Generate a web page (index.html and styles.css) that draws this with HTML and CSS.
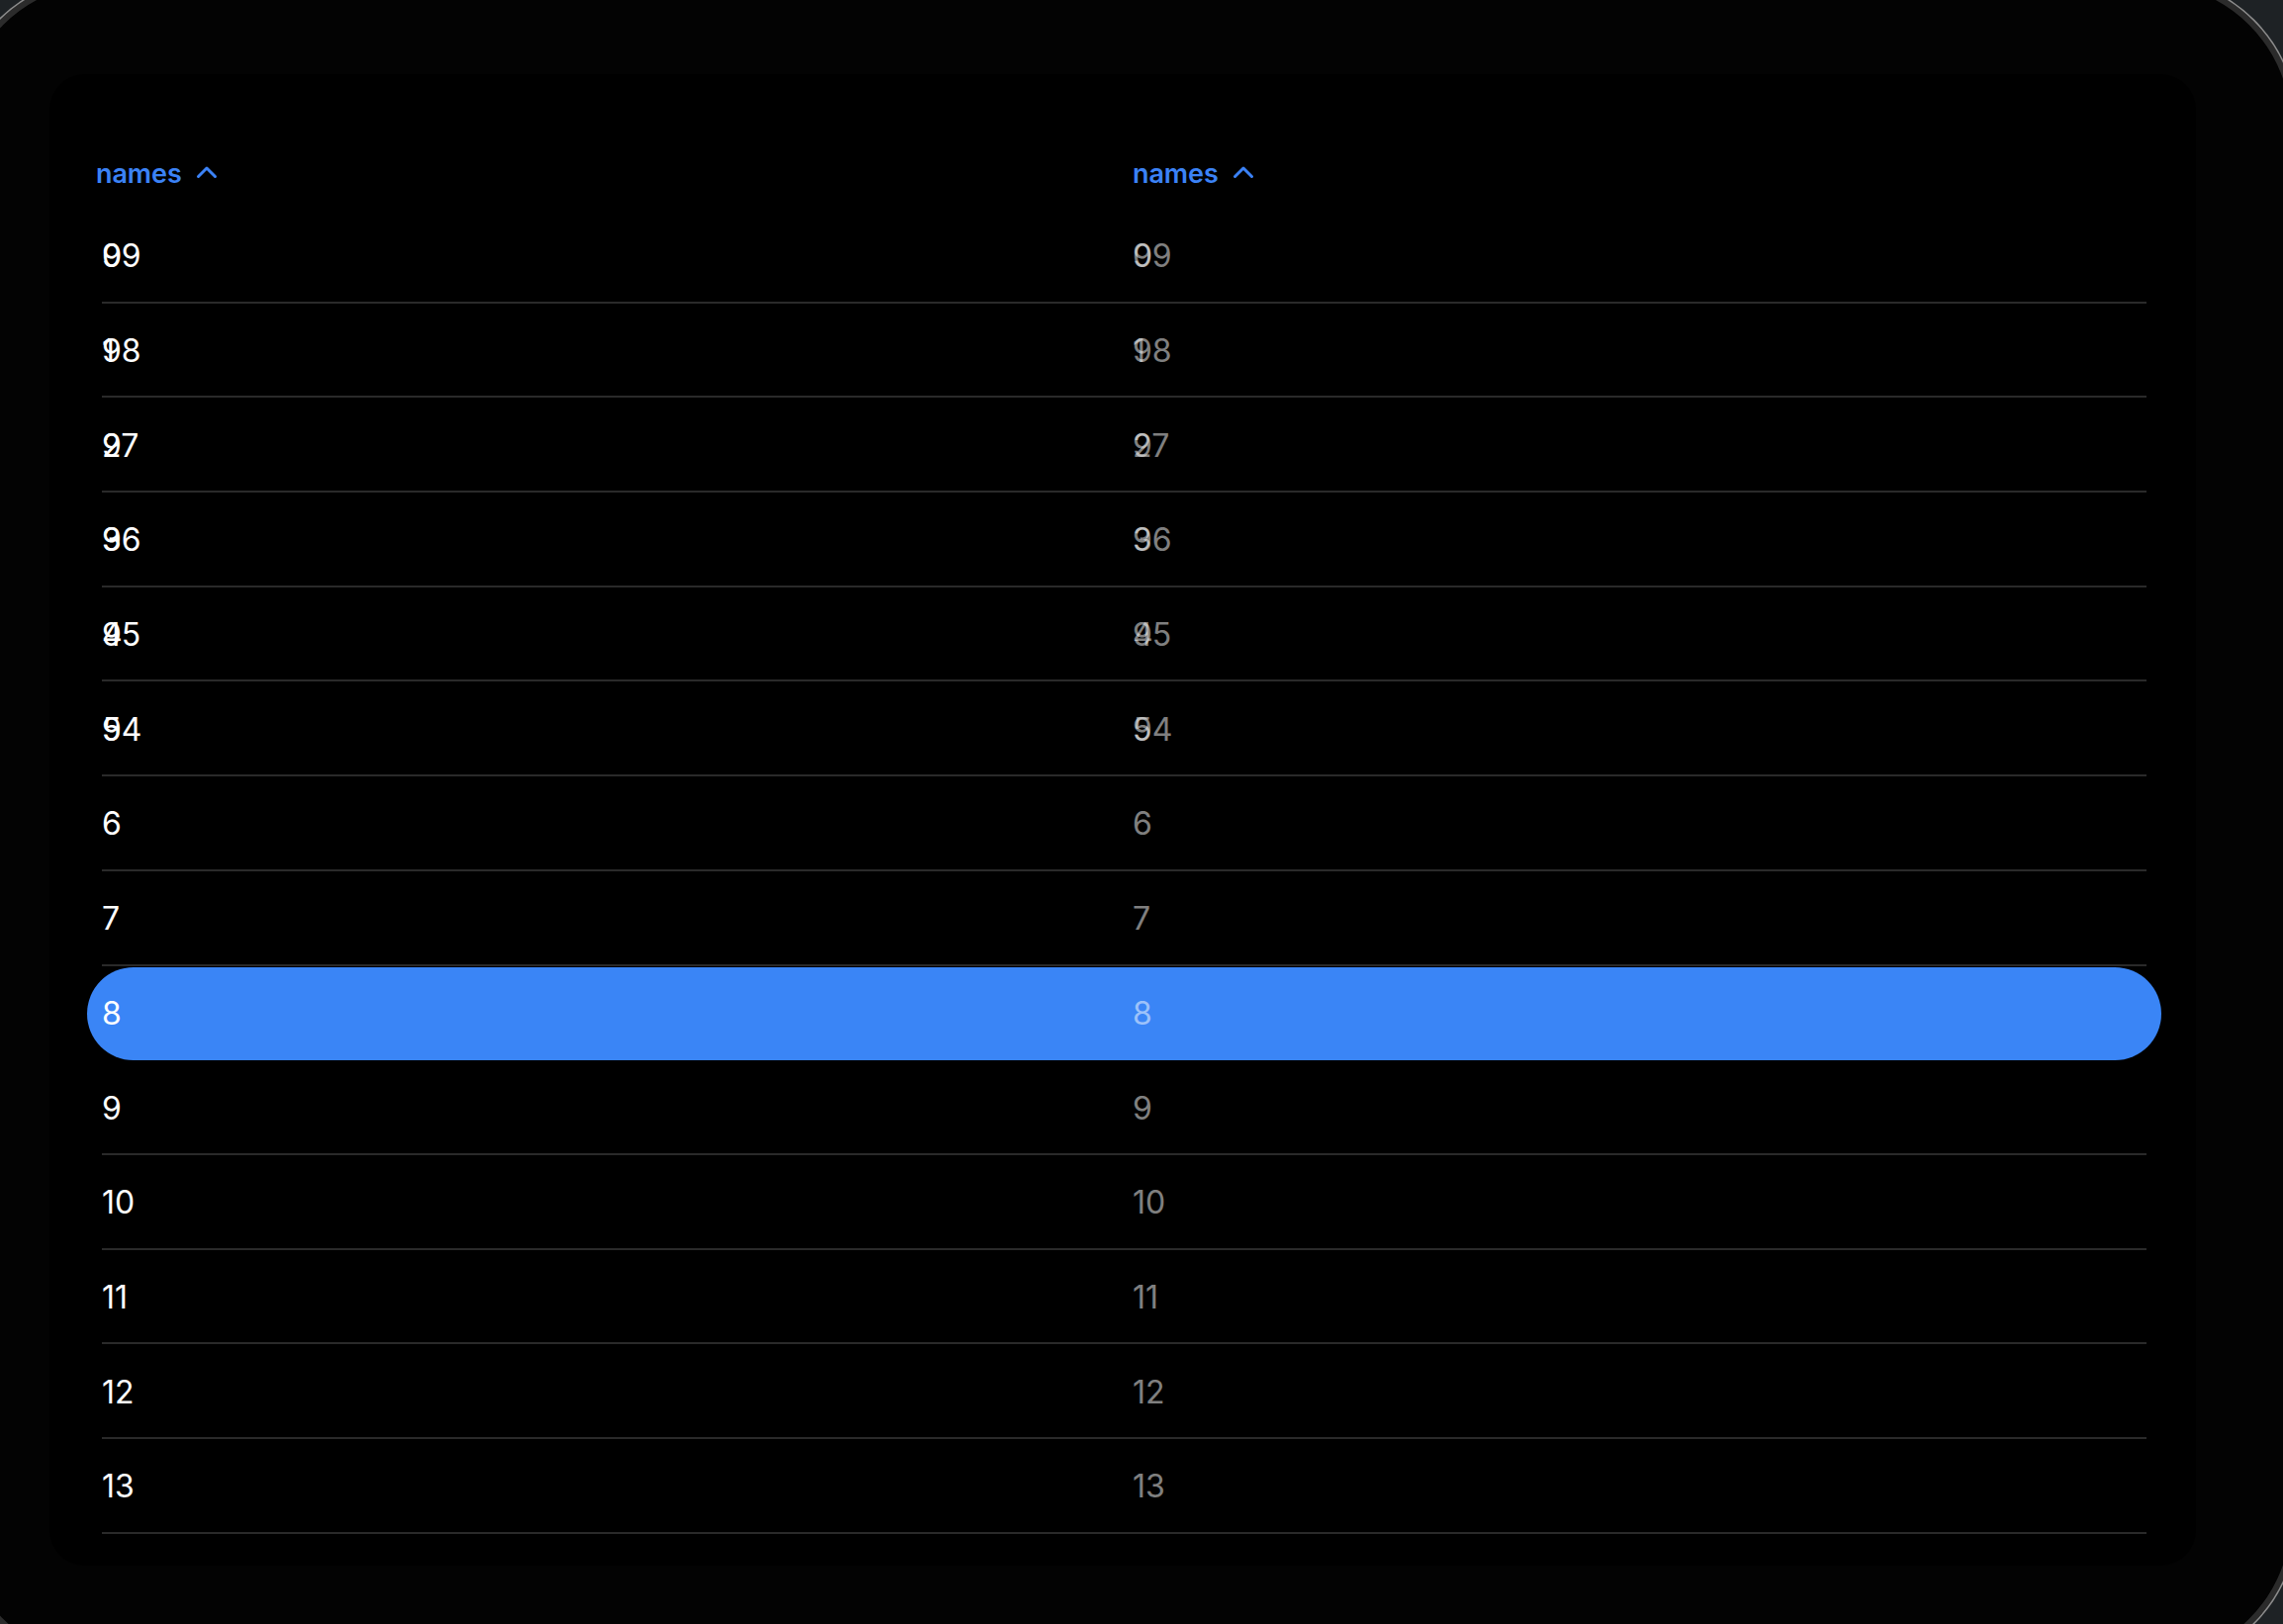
FILE: index.html
```html
<!DOCTYPE html>
<html lang="en">
<head>
<meta charset="utf-8">
<title>names table</title>
<link rel="stylesheet" href="styles.css">
</head>
<body>
<div class="device">
  <div class="panel">
    <div class="table">
      <div class="head">
        <div class="th th-first">names
          <svg class="chev" width="22" height="14" viewBox="0 0 22 14"><path d="M2.5 11.5 L11 3 L19.5 11.5" fill="none" stroke="currentColor" stroke-width="3" stroke-linecap="round" stroke-linejoin="round"/></svg>
        </div>
        <div class="th">names
          <svg class="chev" width="22" height="14" viewBox="0 0 22 14"><path d="M2.5 11.5 L11 3 L19.5 11.5" fill="none" stroke="currentColor" stroke-width="3" stroke-linecap="round" stroke-linejoin="round"/></svg>
        </div>
      </div>

      <div class="row"><div class="cell"><span class="stack"><span>0</span><span>99</span></span></div><div class="cell dim"><span class="stack"><span>0</span><span>99</span></span></div></div>
      <div class="row"><div class="cell"><span class="stack"><span>1</span><span>98</span></span></div><div class="cell dim"><span class="stack"><span>1</span><span>98</span></span></div></div>
      <div class="row"><div class="cell"><span class="stack"><span>2</span><span>97</span></span></div><div class="cell dim"><span class="stack"><span>2</span><span>97</span></span></div></div>
      <div class="row"><div class="cell"><span class="stack"><span>3</span><span>96</span></span></div><div class="cell dim"><span class="stack"><span>3</span><span>96</span></span></div></div>
      <div class="row"><div class="cell"><span class="stack"><span>4</span><span>95</span></span></div><div class="cell dim"><span class="stack"><span>4</span><span>95</span></span></div></div>
      <div class="row"><div class="cell"><span class="stack"><span>5</span><span>94</span></span></div><div class="cell dim"><span class="stack"><span>5</span><span>94</span></span></div></div>
      <div class="row"><div class="cell">6</div><div class="cell dim">6</div></div>
      <div class="row"><div class="cell">7</div><div class="cell dim">7</div></div>
      <div class="row selected"><div class="cell">8</div><div class="cell dim">8</div></div>
      <div class="row"><div class="cell">9</div><div class="cell dim">9</div></div>
      <div class="row"><div class="cell">10</div><div class="cell dim">10</div></div>
      <div class="row"><div class="cell">11</div><div class="cell dim">11</div></div>
      <div class="row"><div class="cell">12</div><div class="cell dim">12</div></div>
      <div class="row"><div class="cell">13</div><div class="cell dim">13</div></div>
    </div>
  </div>
</div>
</body>
</html>
```

FILE: styles.css
```css
* { box-sizing: border-box; }

html, body {
  margin: 0;
  padding: 0;
  width: 2308px;
  height: 1642px;
  overflow: hidden;
  background: #1e2225;
}

body {
  font-family: Inter, "Noto Sans", sans-serif;
  color: #ffffff;
}

.device {
  width: 2367px;
  height: 1708px;
  margin: -23px 0 0 -45px;
  border-radius: 150px;
  border: 6px solid #2b2b2b;
  box-shadow: 0 0 0 1.5px #8c8c8c;
  background: #030303;
  overflow: hidden;
}

.panel {
  width: 2170px;
  height: 1508px;
  margin: 92px 0 0 89px;
  border-radius: 36px;
  background: #000000;
  padding: 70px 0 0 53px;
}

.table {
  width: 2067px;
}

.head {
  display: grid;
  grid-template-columns: 1042px 1fr;
  height: 66px;
  padding-bottom: 5px;
  align-items: center;
}

.th {
  display: flex;
  align-items: center;
  gap: 14px;
  font-size: 27px;
  font-weight: 600;
  color: #3b82f6;
  letter-spacing: -0.1px;
}

.th-first {
  margin-left: -6px;
}

.chev {
  color: #3b82f6;
  margin-top: -3px;
}

.row {
  position: relative;
  display: grid;
  grid-template-columns: 1042px 1fr;
  align-items: center;
  height: 95.69px;
  border-bottom: 2px solid #2a2a2a;
  font-size: 32px;
  padding-top: 3px;
}

.cell {
  position: relative;
  z-index: 1;
  line-height: 1;
}

.dim {
  color: rgba(255, 255, 255, 0.52);
}

.stack {
  display: inline-grid;
}

.stack > span {
  grid-area: 1 / 1;
}

.selected {
  border-bottom-color: transparent;
}

.selected::before {
  content: "";
  position: absolute;
  top: 1px;
  bottom: -2px;
  left: -15px;
  right: -15px;
  border-radius: 48px;
  background: #3a85f6;
  z-index: 0;
}
```
